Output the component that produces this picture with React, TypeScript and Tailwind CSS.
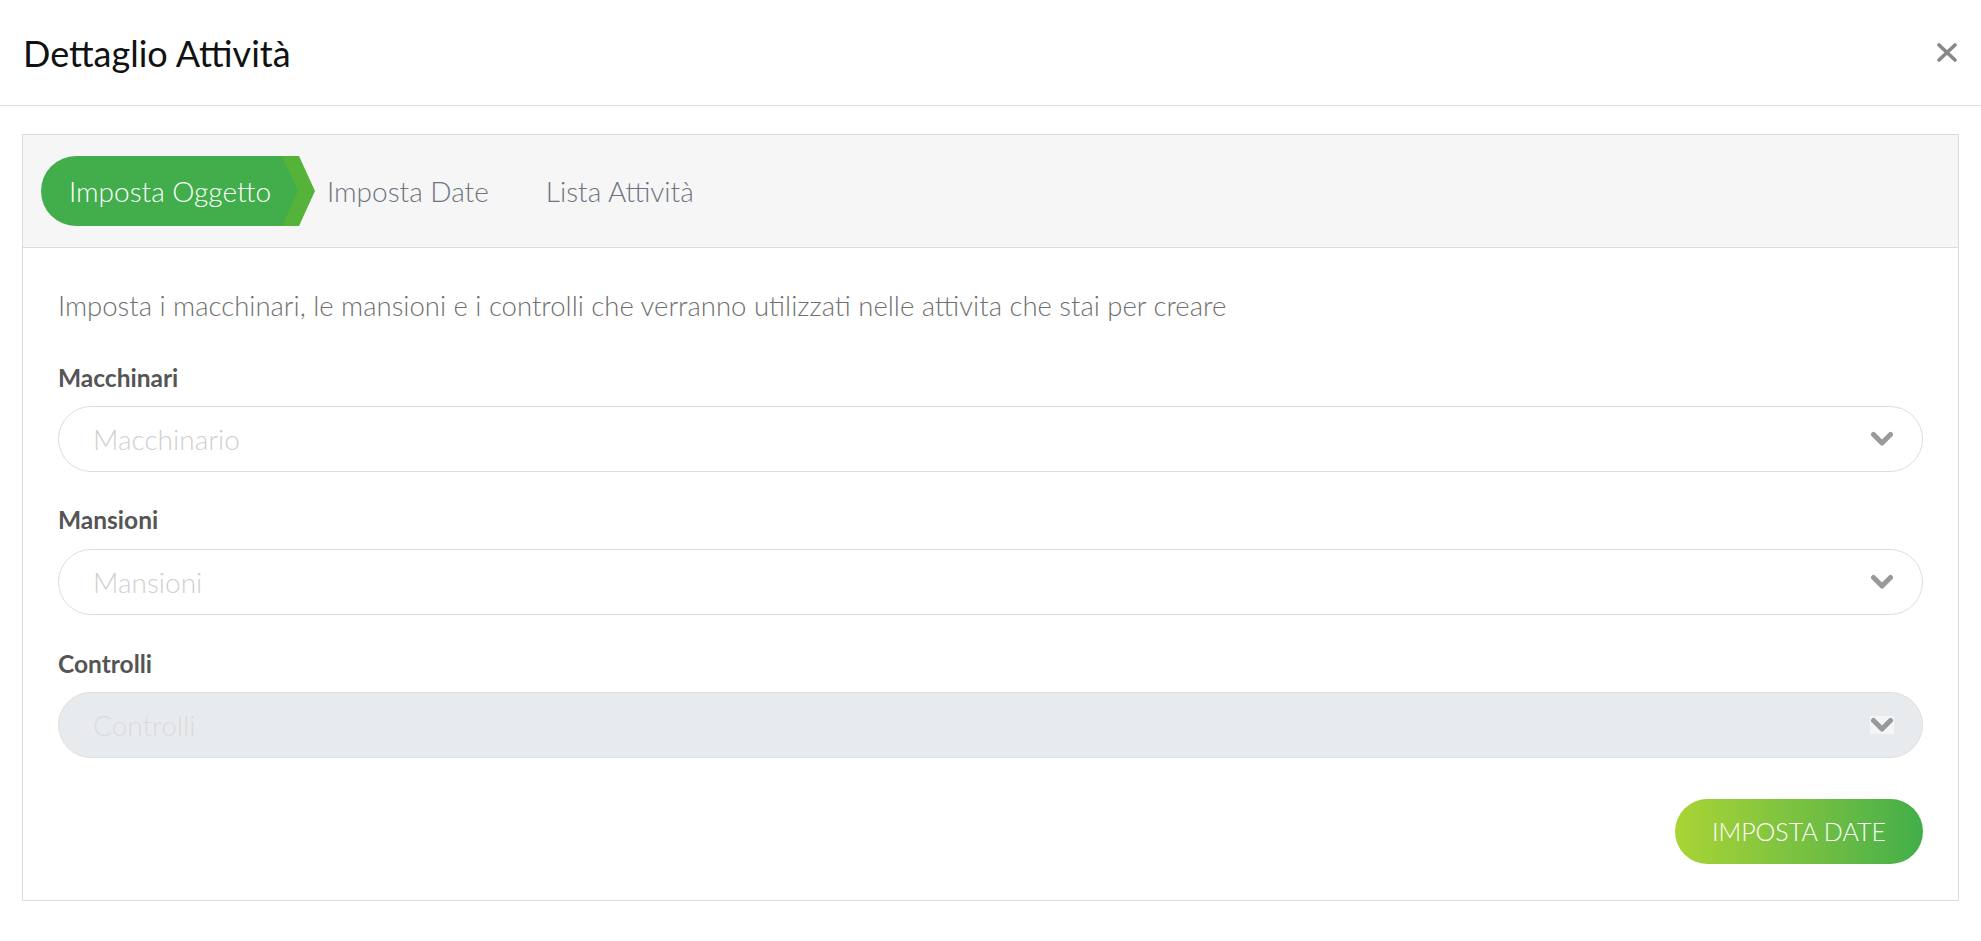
import React from "react";

function Chevron() {
  return (
    <svg width="24" height="16" viewBox="0 0 24 16">
      <polyline points="3.5,3.5 12,12 20.5,3.5" fill="none" stroke="#999" strokeWidth="5" strokeLinecap="round" strokeLinejoin="round" />
    </svg>
  );
}

function Select({ placeholder, disabled }: { placeholder: string; disabled?: boolean }) {
  return (
    <div
      className={`h-[66px] rounded-full border border-[#dedede] flex items-center justify-between pl-[34px] pr-[28px] ${
        disabled ? "bg-[#e8ebee]" : "bg-white"
      }`}
    >
      <span className={`text-[28px] font-light ${disabled ? "text-[#d9dbde]" : "text-[#d0d0d0]"}`}>{placeholder}</span>
      <span className={`flex items-center justify-center w-[24px] h-[18px] ${disabled ? "bg-[#f4f5f6]" : ""}`}>
        <Chevron />
      </span>
    </div>
  );
}

export default function App() {
  return (
    <div className="w-[1981px] h-[941px] bg-white font-['Lato',sans-serif]">
      <div className="h-[106px] border-b border-[#e0e0e0] flex items-center justify-between pl-[23px] pr-[24px]">
        <h1 className="text-[36px] leading-none text-[#111] font-normal">Dettaglio Attività</h1>
        <svg width="20" height="19" viewBox="0 0 20 19">
          <line x1="2" y1="2" x2="18" y2="17" stroke="#888" strokeWidth="3.6" strokeLinecap="round" />
          <line x1="18" y1="2" x2="2" y2="17" stroke="#888" strokeWidth="3.6" strokeLinecap="round" />
        </svg>
      </div>
      <div className="px-[22px] pt-[28px]">
        <div className="border border-[#dcdcdc] h-[767px]">
          <div className="h-[113px] bg-[#f6f6f6] border-b border-[#dcdcdc] flex items-center pl-[18px]">
            <div className="relative w-[275px] h-[70px] flex items-center pl-[28px]">
              <svg className="absolute left-0 top-0" width="275" height="70" viewBox="0 0 275 70">
                <path d="M 35 0 L 258 0 L 274 35 L 258 70 L 35 70 Z" fill="#56b33a" />
                <path d="M 35 0 L 241 0 L 257 35 L 241 70 L 35 70 A 35 35 0 0 1 35 0 Z" fill="#41ad4b" />
              </svg>
              <span className="relative text-[28px] font-light text-white leading-none">Imposta Oggetto</span>
            </div>
            <span className="ml-[11px] text-[28px] font-light text-[#6d7480] leading-none">Imposta Date</span>
            <span className="ml-[57px] text-[28px] font-light text-[#6d7480] leading-none">Lista Attività</span>
          </div>
          <div className="px-[35px] pt-[44px]">
            <p className="text-[27.5px] font-light text-[#707070] leading-none">
              Imposta i macchinari, le mansioni e i controlli che verranno utilizzati nelle attivita che stai per creare
            </p>
            <div className="mt-[46px] text-[24.5px] font-bold text-[#555] leading-none">Macchinari</div>
            <div className="mt-[16px]">
              <Select placeholder="Macchinario" />
            </div>
            <div className="mt-[36px] text-[24.5px] font-bold text-[#555] leading-none">Mansioni</div>
            <div className="mt-[16px]">
              <Select placeholder="Mansioni" />
            </div>
            <div className="mt-[37px] text-[24.5px] font-bold text-[#555] leading-none">Controlli</div>
            <div className="mt-[16px]">
              <Select placeholder="Controlli" disabled />
            </div>
            <div className="flex justify-end mt-[41px]">
              <button className="h-[65px] w-[248px] rounded-full bg-gradient-to-r from-[#a9d434] to-[#3fae48] text-white text-[25px] font-light uppercase">
                Imposta Date
              </button>
            </div>
          </div>
        </div>
      </div>
    </div>
  );
}
